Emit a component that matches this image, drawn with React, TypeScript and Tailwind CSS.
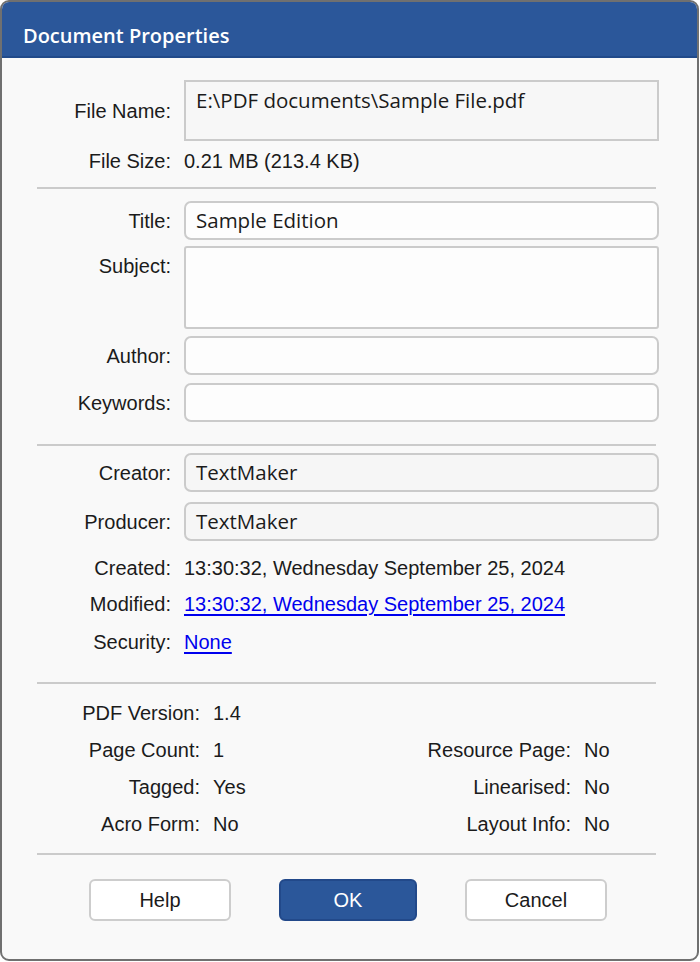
const font = 'font-["Liberation_Sans",Arial,sans-serif] text-[20px]';
const label = `${font} text-[#1b1b1b]`;
const fieldText = 'font-["Open_Sans","Noto_Sans",sans-serif] text-[20.5px] text-[#1b1b1b]';

function Separator({ className = '' }: { className?: string }) {
  return <div className={`h-[2px] mr-[3px] bg-[#cbcbcb] ${className}`} />;
}

function Label({ children }: { children: React.ReactNode }) {
  return <div className={`w-[134px] shrink-0 text-right ${label}`}>{children}</div>;
}

function Field({ labelText, value, readOnly, className = '' }: { labelText: string; value?: string; readOnly?: boolean; className?: string }) {
  return (
    <div className={`flex items-center gap-[13px] ${className}`}>
      <Label>{labelText}</Label>
      <div
        className={`flex-1 h-[39px] flex items-center px-[10px] rounded-[7px] border-2 border-[#cbcbcb] ${
          readOnly ? 'bg-[#f6f6f6]' : 'bg-[#fdfdfd]'
        } ${fieldText}`}
      >
        {value}
      </div>
    </div>
  );
}

function InfoRow({ labelText, value, link, className = '' }: { labelText: string; value: string; link?: boolean; className?: string }) {
  return (
    <div className={`flex items-center gap-[13px] h-[36px] ${className}`}>
      <Label>{labelText}</Label>
      <span className={link ? `${font} text-[#0000ee] underline underline-offset-[3px]` : label}>{value}</span>
    </div>
  );
}

function StatRow({ left, leftValue, right, rightValue }: { left: string; leftValue: string; right?: string; rightValue?: string }) {
  return (
    <div className={`flex items-center h-[37px] ${label}`}>
      <div className="w-[363px] flex items-center gap-[13px]">
        <span className="w-[163px] text-right">{left}</span>
        <span>{leftValue}</span>
      </div>
      {right && (
        <div className="flex items-center gap-[13px]">
          <span className="w-[171px] text-right">{right}</span>
          <span>{rightValue}</span>
        </div>
      )}
    </div>
  );
}

function DialogButton({ children, primary }: { children: React.ReactNode; primary?: boolean }) {
  return (
    <button
      className={`h-[42px] rounded-[6px] border-2 ${font} ${
        primary
          ? 'w-[138px] bg-[#2b579a] border-[#22498a] text-white'
          : 'w-[142px] bg-white border-[#cdcdcd] text-[#1b1b1b]'
      }`}
    >
      {children}
    </button>
  );
}

export default function App() {
  return (
    <div className="w-[700px] h-[962px] bg-white">
      <div className="w-[699px] h-[961px] flex flex-col rounded-[9px] border-2 border-[#707070] overflow-hidden bg-[#f9f9f9]">
        <div className="h-[56px] shrink-0 bg-[#2b579a] border-b-2 border-[#214a8a] flex items-center pl-[21px] pt-[13px]">
          <span className='font-["Open_Sans","Noto_Sans",sans-serif] font-semibold text-[20px] text-white'>
            Document Properties
          </span>
        </div>

        <div className="flex-1 pl-[35px] pr-[38px] pt-[22px] flex flex-col">
          <div className="flex items-center gap-[13px]">
            <Label>File Name:</Label>
            <div className={`flex-1 h-[61px] border-2 border-[#cbcbcb] bg-[#f7f7f7] px-[10px] pt-[3px] ${fieldText}`}>
              E:\PDF documents\Sample File.pdf
            </div>
          </div>
          <InfoRow labelText="File Size:" value="0.21 MB (213.4 KB)" className="mt-[2px]" />

          <Separator className="mt-[8px]" />

          <Field labelText="Title:" value="Sample Edition" className="mt-[12px]" />
          <div className="flex items-start gap-[13px] mt-[6px]">
            <div className="h-[39px] flex items-center">
              <Label>Subject:</Label>
            </div>
            <div className="flex-1 h-[83px] rounded-[3px] border-2 border-[#cbcbcb] bg-[#fdfdfd]" />
          </div>
          <Field labelText="Author:" className="mt-[7px]" />
          <Field labelText="Keywords:" className="mt-[8px]" />

          <Separator className="mt-[22px]" />

          <Field labelText="Creator:" value="TextMaker" readOnly className="mt-[7px]" />
          <Field labelText="Producer:" value="TextMaker" readOnly className="mt-[10px]" />

          <InfoRow labelText="Created:" value="13:30:32, Wednesday September 25, 2024" className="mt-[9px]" />
          <InfoRow labelText="Modified:" value="13:30:32, Wednesday September 25, 2024" link />
          <InfoRow labelText="Security:" value="None" link className="mt-[2px]" />

          <Separator className="mt-[22px]" />

          <div className="mt-[10px]">
            <StatRow left="PDF Version:" leftValue="1.4" />
            <StatRow left="Page Count:" leftValue="1" right="Resource Page:" rightValue="No" />
            <StatRow left="Tagged:" leftValue="Yes" right="Linearised:" rightValue="No" />
            <StatRow left="Acro Form:" leftValue="No" right="Layout Info:" rightValue="No" />
          </div>

          <Separator className="mt-[11px]" />

          <div className="mt-[24px] flex items-center pl-[52px] gap-[48px]">
            <DialogButton>Help</DialogButton>
            <DialogButton primary>OK</DialogButton>
            <DialogButton>Cancel</DialogButton>
          </div>
        </div>
      </div>
    </div>
  );
}
